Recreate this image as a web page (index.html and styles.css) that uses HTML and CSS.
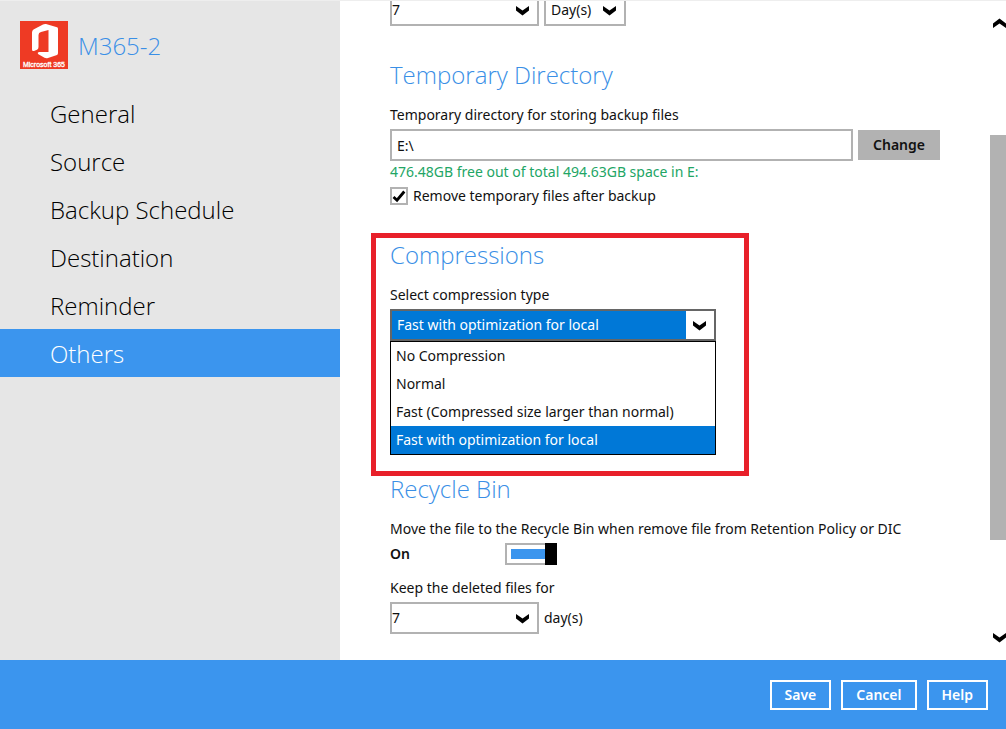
FILE: index.html
```html
<!DOCTYPE html>
<html lang="en">
<head>
    <meta charset="UTF-8">
    <meta name="viewport" content="width=device-width, initial-scale=1.0">
    <title>M365-2</title>
    <link rel="stylesheet" href="styles.css">
</head>
<body>
    <svg class="defs" aria-hidden="true">
        <symbol id="arrow" viewBox="0 0 13 10">
            <path d="M0 0 L6.5 4.5 L13 0 V4.5 L6.5 9.5 L0 4.5 Z"/>
        </symbol>
    </svg>
    <div class="main">
        <nav class="sidebar">
            <div class="brand">
                <svg class="logo" viewBox="0 0 48 48" role="img" aria-label="Microsoft 365">
                    <rect width="48" height="48" fill="#ee3a24"/>
                    <path fill="#fff" d="M26 3 L37 6.200 Q38 6.500 38 8 V32 Q38 33.500 37 34 L28 37 Q26 37.500 24.500 36.700 L18 33 Q17 31.500 19 31 H28.500 V9 L21 11 Q18.500 11.700 18.500 14 V26 Q18.500 28 17 28.800 L14 30 Q12 30.500 12 28.500 V11.500 Q12 9.500 13.500 8.600 L23 3.500 Q24.500 2.600 26 3 Z"/>
                    <text class="logo-text" x="24" y="46" text-anchor="middle">Microsoft 365</text>
                </svg>
                <span class="brand-name">M365-2</span>
            </div>
            <ul class="menu-list">
                <li><a href="#">General</a></li>
                <li><a href="#">Source</a></li>
                <li><a href="#">Backup Schedule</a></li>
                <li><a href="#">Destination</a></li>
                <li><a href="#">Reminder</a></li>
                <li><a href="#" class="active">Others</a></li>
            </ul>
        </nav>
        <div class="content">
            <div class="row row-cut">
                <div class="select">
                    <select aria-label="Retention period"><option>7</option></select>
                    <svg class="arrow"><use href="#arrow"/></svg>
                </div>
                <div class="select select-unit">
                    <select aria-label="Retention unit"><option>Day(s)</option></select>
                    <svg class="arrow"><use href="#arrow"/></svg>
                </div>
            </div>

            <section class="section">
                <h2>Temporary Directory</h2>
                <label class="label" for="tempDir">Temporary directory for storing backup files</label>
                <div class="row">
                    <input type="text" class="text-box" id="tempDir" value="E:\">
                    <button type="button" class="btn-change">Change</button>
                </div>
                <p class="space-info">476.48GB free out of total 494.63GB space in E:</p>
                <div class="row check-row">
                    <input type="checkbox" class="check" id="removeTemp" checked>
                    <label for="removeTemp">Remove temporary files after backup</label>
                </div>
            </section>

            <section class="section highlight">
                <h2>Compressions</h2>
                <label class="label" for="compression">Select compression type</label>
                <div class="select select-open">
                    <select id="compression">
                        <option>No Compression</option>
                        <option>Normal</option>
                        <option>Fast (Compressed size larger than normal)</option>
                        <option selected>Fast with optimization for local</option>
                    </select>
                    <svg class="arrow"><use href="#arrow"/></svg>
                </div>
                <ul class="options" role="listbox" aria-label="Compression types">
                    <li role="option">No Compression</li>
                    <li role="option">Normal</li>
                    <li role="option">Fast (Compressed size larger than normal)</li>
                    <li role="option" class="selected" aria-selected="true">Fast with optimization for local</li>
                </ul>
            </section>

            <section class="section section-bin">
                <h2>Recycle Bin</h2>
                <p class="label">Move the file to the Recycle Bin when remove file from Retention Policy or DIC</p>
                <div class="switch-row">
                    <label for="recycle">On</label>
                    <input type="checkbox" class="switch" id="recycle" checked>
                </div>
                <label class="label" for="keepDays">Keep the deleted files for</label>
                <div class="row">
                    <div class="select">
                        <select id="keepDays"><option>7</option></select>
                        <svg class="arrow"><use href="#arrow"/></svg>
                    </div>
                    <span>day(s)</span>
                </div>
            </section>
        </div>
        <div class="scrollbar">
            <button type="button" class="scroll-btn scroll-up" aria-label="Scroll up"><svg><use href="#arrow"/></svg></button>
            <div class="thumb"></div>
            <button type="button" class="scroll-btn scroll-down" aria-label="Scroll down"><svg><use href="#arrow"/></svg></button>
        </div>
    </div>
    <footer class="footer">
        <button type="button">Save</button>
        <button type="button">Cancel</button>
        <button type="button">Help</button>
    </footer>
</body>
</html>
```
FILE: styles.css
```css
*{
    box-sizing: border-box;
}

body{
    display: flex;
    flex-direction: column;
    margin: 0;
    min-height: 100vh;
    font-family: "Noto Sans", "Open Sans", sans-serif;
    font-size: 14px;
    line-height: 20px;
    color: #111;
    background-color: #fff;
}

h2, p, ul{
    margin: 0;
    padding: 0;
}

ul{
    list-style: none;
}

button, input, select{
    margin: 0;
    border-radius: 0;
    font-family: inherit;
    font-size: 14px;
    line-height: 20px;
    color: inherit;
}

.defs{
    display: none;
}

.main{
    display: flex;
    flex: 1;
    border-top: 1px solid #eee;
}

/* sidebar */
.sidebar{
    flex: 0 0 340px;
    background-color: #e6e6e6;
}

.brand{
    display: flex;
    align-items: center;
    gap: 10px;
    padding: 20px;
}

.logo{
    width: 48px;
    height: 48px;
}

.logo-text{
    font-family: "Liberation Sans", sans-serif;
    font-size: 7px;
    fill: #fff;
    stroke: #fff;
    stroke-width: 0.3px;
}

h2, .brand-name, .menu-list a{
    font-family: "Open Sans", sans-serif;
    font-size: 24px;
    font-weight: 300;
    line-height: 34px;
}

h2, .brand-name{
    color: #3a8fe6;
}

.brand-name{
    padding-top: 2px;
}

.menu-list a{
    display: block;
    padding: 8px 50px 6px;
    color: #000;
    text-decoration: none;
}

.menu-list a.active{
    color: #fff;
    background-color: #3b95ee;
}

/* content */
.content{
    flex: 1;
    min-width: 0;
    padding: 0 50px 26px;
    overflow: hidden;
}

.row{
    display: flex;
    align-items: center;
    gap: 5px;
}

/* scrolled partly out of view */
.row-cut{
    margin-top: -7px;
}

.section{
    margin-top: 32px;
}

h2{
    margin-bottom: 13px;
}

.label{
    display: block;
    margin-bottom: 4px;
}

.select{
    position: relative;
    width: 149px;
}

.select select{
    display: block;
    width: 100%;
    height: 32px;
    padding: 0;
    border: 2px solid #b2b2b2;
    background-color: #fff;
    appearance: none;
}

.arrow{
    position: absolute;
    top: 12px;
    right: 10px;
    width: 13px;
    height: 10px;
    pointer-events: none;
}

.select-unit{
    width: 82px;
}

.select-unit select{
    padding-left: 5px;
}

.text-box{
    flex: 1;
    min-width: 0;
    height: 32px;
    padding: 0 5px;
    border: 2px solid #b2b2b2;
}

.btn-change{
    height: 30px;
    padding: 0 15px;
    border: 0;
    font-weight: 600;
    background-color: #b2b2b2;
}

.space-info{
    margin: 1px 0 4px;
    color: #22a565;
}

.check{
    width: 18px;
    height: 18px;
    border: 2px solid #b2b2b2;
    appearance: none;
}

.check:checked{
    background: url("data:image/svg+xml,%3Csvg xmlns='http://www.w3.org/2000/svg' viewBox='0 0 14 14'%3E%3Cpath d='M1.500 8 L5 11.200 L12.300 2.500' fill='none' stroke='%23000' stroke-width='2.800'/%3E%3C/svg%3E") center / 14px 14px no-repeat;
}

.highlight{
    width: 378px;
    max-width: 100%;
    margin: 27px 0 -4px -19px;
    padding: 0 14px 16px;
    border: 5px solid #e8202a;
}

.select-open{
    width: 326px;
}

.select-open select{
    padding-left: 5px;
    border-color: #666;
    color: #fff;
    background: linear-gradient(to left, #fff 28px, #0078d7 28px);
}

.select-open option{
    color: #111;
}

.options{
    width: 326px;
    border: 1px solid #000;
}

.options li{
    padding: 4px 5px;
}

.options .selected{
    color: #fff;
    background-color: #0078d7;
}

.section-bin{
    margin-top: 0;
}

.switch-row{
    display: grid;
    grid-template-columns: 115px auto;
    justify-content: start;
    align-items: center;
    margin-bottom: 13px;
    font-weight: 600;
}

.switch{
    width: 52px;
    height: 22px;
    border: 2px solid #b2b2b2;
    border-left: 12px solid #000;
    background-color: #fff;
    appearance: none;
}

.switch:checked{
    border: 0;
    background:
        linear-gradient(#000, #000) right / 12px 100% no-repeat,
        linear-gradient(#3b95ee, #3b95ee) 6px 6px / 36px 10px no-repeat,
        linear-gradient(#fff, #fff) 2px 2px / 40px 18px no-repeat,
        #b2b2b2;
}

/* scrollbar */
.scrollbar{
    display: grid;
    grid-template-rows: 44px 90fr 405fr 75fr 45px;
    flex: 0 0 16px;
}

.scroll-btn{
    display: flex;
    align-items: center;
    justify-content: flex-end;
    padding: 0;
    border: 0;
    background: none;
}

.scroll-btn svg{
    width: 13px;
    height: 10px;
}

.scroll-up svg{
    transform: rotate(180deg);
}

.thumb{
    grid-row: 3;
    background-color: #b2b2b2;
}

.scroll-down{
    grid-row: 5;
}

/* footer */
.footer{
    display: flex;
    justify-content: flex-end;
    gap: 10px;
    padding: 20px 18px 19px;
    background-color: #3b95ee;
}

.footer button{
    height: 30px;
    padding: 0 13px;
    border: 2px solid #fff;
    font-weight: 600;
    color: #fff;
    background: none;
}
```
